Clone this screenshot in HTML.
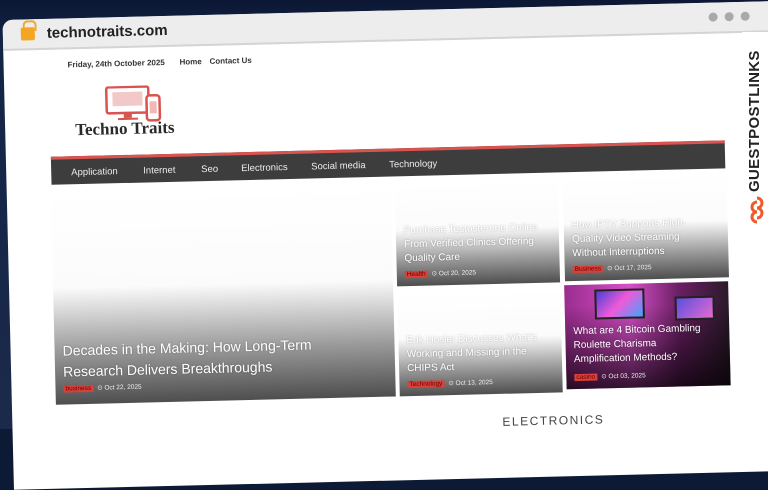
<!DOCTYPE html>
<html><head><meta charset="utf-8"><style>
*{margin:0;padding:0;box-sizing:border-box}
html,body{width:768px;height:429px;overflow:hidden;background:#0d1a36;font-family:"Liberation Sans",sans-serif}
.bg{position:absolute;inset:0;background:linear-gradient(180deg,#0b1733 0,#142447 40px,#1b2a4a 100%)}
.frame{position:absolute;left:0;top:0;width:800px;height:480px;transform-origin:0 0;transform:rotate(-1.4deg)}
.win{position:absolute;left:2px;top:20px;width:790px;height:470px;background:#fff;border-radius:10px 10px 0 0;overflow:hidden}
.bar{position:absolute;left:0;top:0;width:100%;height:31px;background:#ededed;border-bottom:2px solid #d4d4d4}
.url{position:absolute;left:44px;top:6px;font-size:15px;font-weight:bold;color:#222}
.lock{position:absolute;left:18px;top:8px;width:14px;height:13px;background:#f4a623;border-radius:2px}
.lock:before{content:"";position:absolute;left:2px;top:-7px;width:10px;height:9px;border:2px solid #f4a623;border-bottom:none;border-radius:5px 5px 0 0}
.dot{position:absolute;top:10px;width:9px;height:9px;border-radius:50%;background:#a9a9a9}
.a{position:absolute}
.top{font-size:8px;font-weight:bold;color:#333;top:42px}
.nav{position:absolute;left:45px;top:138px;width:674px;height:28px;background:#3d3d3d;border-top:3px solid #d9534f}
.nav span{position:absolute;top:8px;font-size:9.5px;color:#eee}
.card{position:absolute;overflow:hidden;background:linear-gradient(180deg,#fff 0,#fbfbfb 45%,#9a9a9a 75%,#4e4e4e 100%)}
.t{position:absolute;left:8px;width:140px;color:#fff;font-size:10px;line-height:14px;text-shadow:0 0 2px rgba(0,0,0,.3)}
.meta{position:absolute;left:8px;font-size:6.5px;color:#eee}
.tag{background:#d9403a;color:#600;padding:0 2px;margin-right:4px}
</style></head><body>
<div class="bg"></div>
<div class="frame">
 <div class="win">
  <div class="bar"><div class="lock"></div><div class="url">technotraits.com</div>
   <div class="dot" style="left:706px"></div><div class="dot" style="left:722px"></div><div class="dot" style="left:738px"></div></div>
  <div class="a top" style="left:64px">Friday, 24th October 2025</div>
  <div class="a top" style="left:176px">Home</div>
  <div class="a top" style="left:206px">Contact Us</div>
  <svg class="a" style="left:100px;top:69px" width="60" height="38" viewBox="0 0 60 38">
   <rect x="2" y="1" width="42" height="26" rx="2" fill="none" stroke="#d9534f" stroke-width="2.5"/>
   <rect x="8" y="6" width="30" height="14" fill="#f3c9c8"/>
   <rect x="19" y="27" width="8" height="5" fill="#d9534f"/><rect x="13" y="32" width="20" height="2" fill="#d9534f"/>
   <rect x="42" y="10" width="13" height="25" rx="3" fill="#fff" stroke="#d9534f" stroke-width="2.5"/>
   <rect x="45" y="16" width="7" height="12" fill="#f0b9b8"/>
  </svg>
  <div class="a" style="left:70px;top:102px;font-family:'Liberation Serif',serif;font-weight:bold;font-size:17px;color:#2a2a2a">Techno Traits</div>
  <div class="nav"><span style="left:20px">Application</span><span style="left:92px">Internet</span><span style="left:150px">Seo</span><span style="left:190px">Electronics</span><span style="left:260px">Social media</span><span style="left:338px">Technology</span></div>
  <div class="card" style="left:44px;top:174px;width:340px;height:212px">
   <div class="t" style="top:148px;width:320px;font-size:14px;line-height:21px">Decades in the Making: How Long-Term<br>Research Delivers Breakthroughs</div>
   <div class="meta" style="top:192px"><span class="tag">business</span>⊙ Oct 22, 2025</div></div>
  <div class="card" style="left:388px;top:174px;width:163px;height:102px">
   <div class="t" style="top:40px">Purchase Testosterone Online From Verified Clinics Offering Quality Care</div>
   <div class="meta" style="top:86px"><span class="tag">Health</span>⊙ Oct 20, 2025</div></div>
  <div class="card" style="left:556px;top:171px;width:164px;height:104px">
   <div class="t" style="top:42px">How IPTV Supports High-Quality Video Streaming Without Interruptions</div>
   <div class="meta" style="top:88px"><span class="tag">Business</span>⊙ Oct 17, 2025</div></div>
  <div class="card" style="left:388px;top:282px;width:163px;height:104px">
   <div class="t" style="top:42px">Erik Hosler Discusses What's Working and Missing in the CHIPS Act</div>
   <div class="meta" style="top:88px"><span class="tag">Technology</span>⊙ Oct 13, 2025</div></div>
  <div class="card" style="left:555px;top:279px;width:164px;height:104px;background:linear-gradient(180deg,rgba(0,0,0,0) 20%,rgba(0,0,0,.75) 100%),linear-gradient(90deg,#9a2d8e,#d64fc8 40%,#6a1f63 70%,#2b1a2a)">
   <div class="a" style="left:30px;top:5px;width:50px;height:30px;background:linear-gradient(135deg,#4b3fd6,#f05ad8,#3fa3ff);border:2px solid #222"></div>
   <div class="a" style="left:110px;top:14px;width:40px;height:24px;background:linear-gradient(135deg,#5a4fe0,#e66ad0);border:2px solid #222"></div>
   <div class="t" style="top:40px">What are 4 Bitcoin Gambling Roulette Charisma Amplification Methods?</div>
   <div class="meta" style="top:88px"><span class="tag">casino</span>⊙ Oct 03, 2025</div></div>
  <div class="a" style="left:490px;top:407px;font-size:12px;letter-spacing:1.5px;color:#444">ELECTRONICS</div>
 </div>
</div>
<div class="a" style="left:742px;top:32px;width:26px;height:200px;background:#fff"></div>
<div class="a" style="left:746px;top:192px;transform-origin:0 0;transform:rotate(-90deg);font-weight:bold;font-size:15px;color:#222;white-space:nowrap;letter-spacing:.3px">GUESTPOSTLINKS</div>
<svg class="a" style="left:748px;top:195px" width="18" height="30" viewBox="0 0 18 30"><path d="M9 3a5 5 0 0 1 0 10a5 5 0 0 1 0 10M9 27a5 5 0 0 1 0-10a5 5 0 0 1 0-10" fill="none" stroke="#f05a28" stroke-width="3"/></svg>
</body></html>
